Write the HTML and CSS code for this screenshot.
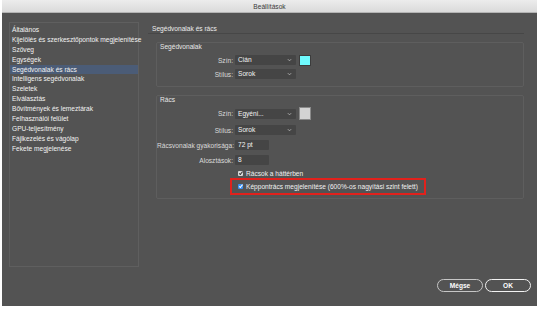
FILE: index.html
```html
<!DOCTYPE html>
<html lang="hu">
<head>
    <meta charset="UTF-8">
    <title>Beállítások</title>
    <link rel="stylesheet" href="styles.css">
</head>
<body>
    <div class="dialog">
        <div class="titlebar">Beállítások</div>

        <div class="main">
            <ul class="nav">
                <li>Általános</li>
                <li>Kijelölés és szerkesztőpontok megjelenítése</li>
                <li>Szöveg</li>
                <li>Egységek</li>
                <li class="active">Segédvonalak és rács</li>
                <li>Intelligens segédvonalak</li>
                <li>Szeletek</li>
                <li>Elválasztás</li>
                <li>Bővítmények és lemeztárak</li>
                <li>Felhasználói felület</li>
                <li>GPU-teljesítmény</li>
                <li>Fájlkezelés és vágólap</li>
                <li>Fekete megjelenése</li>
            </ul>

            <div class="content">
                <div class="heading">Segédvonalak és rács</div>

                <div class="group">
                    <div class="group-title">Segédvonalak</div>
                    <div class="row">
                        <span class="label">Szín:</span>
                        <div class="select">Cián
                            <svg class="chevron" viewBox="0 0 6 4"><path d="M1 1 L3 3 L5 1"/></svg>
                        </div>
                        <span class="swatch swatch-cyan"></span>
                    </div>
                    <div class="row">
                        <span class="label">Stílus:</span>
                        <div class="select">Sorok
                            <svg class="chevron" viewBox="0 0 6 4"><path d="M1 1 L3 3 L5 1"/></svg>
                        </div>
                    </div>
                </div>

                <div class="group group-grid">
                    <div class="group-title">Rács</div>
                    <div class="row row-tall">
                        <span class="label">Szín:</span>
                        <div class="select">Egyéni...
                            <svg class="chevron" viewBox="0 0 6 4"><path d="M1 1 L3 3 L5 1"/></svg>
                        </div>
                        <span class="swatch swatch-grey"></span>
                    </div>
                    <div class="row">
                        <span class="label">Stílus:</span>
                        <div class="select">Sorok
                            <svg class="chevron" viewBox="0 0 6 4"><path d="M1 1 L3 3 L5 1"/></svg>
                        </div>
                    </div>
                    <div class="row">
                        <span class="label">Rácsvonalak gyakorisága:</span>
                        <div class="field">72 pt</div>
                    </div>
                    <div class="row">
                        <span class="label">Alosztások:</span>
                        <div class="field">8</div>
                    </div>
                    <div class="check-row">
                        <span class="check"></span>
                        <span>Rácsok a háttérben</span>
                    </div>
                    <div class="highlight">
                        <div class="check-row">
                            <span class="check check-blue"></span>
                            <span>Képpontrács megjelenítése (600%-os nagyítási szint felett)</span>
                        </div>
                    </div>
                </div>
            </div>
        </div>

        <div class="footer">
            <button class="btn">Mégse</button>
            <button class="btn btn-ok">OK</button>
        </div>
    </div>
</body>
</html>
```

FILE: styles.css
```css
* {
    box-sizing: border-box;
    margin: 0;
    padding: 0;
}

body {
    background: #ffffff;
    font-family: "Liberation Sans", Arial, sans-serif;
    font-size: 6.6px;
    color: #e4e4e4;
}

.dialog {
    width: 535px;
    height: 306px;
    margin-left: 2px;
    background: #535353;
    display: flex;
    flex-direction: column;
}

.titlebar {
    height: 13px;
    line-height: 13px;
    text-align: center;
    color: #3a3a3a;
    background: linear-gradient(#ececec, #dadada);
    border-bottom: 1px solid #b4b4b4;
}

.main {
    display: flex;
    padding: 9px 0 0 7px;
}

/* left category list */
.nav {
    list-style: none;
    width: 130px;
    height: 245px;
    border: 1px solid #5f5f5f;
    padding-top: 2px;
}

.nav li {
    line-height: 9.9px;
    height: 9.9px;
    padding-left: 2px;
    color: #f2f2f2;
    white-space: nowrap;
}

.nav li.active {
    background: #4b5c77;
}

.content {
    width: 376px;
    margin-left: 9px;
}

.heading {
    margin-top: 3px;
    line-height: 8px;
    padding-left: 4px;
    border-bottom: 1px solid #474747;
    color: #ececec;
}

.group {
    margin: 8px 0 0 8px;
    border: 1px solid #5e5e5e;
    border-radius: 2px;
    padding-bottom: 7px;
}

.group-grid {
    padding-bottom: 3px;
}

.group-title {
    line-height: 8px;
    padding-left: 3px;
    color: #e8e8e8;
}

.row {
    display: flex;
    align-items: center;
    height: 10px;
    margin-top: 4px;
}

.group .row:first-of-type {
    margin-top: 5px;
}

.group-grid .row {
    margin-top: 5px;
}

.group-grid .row-tall {
    height: 13px;
    margin-top: 3px;
}

.label {
    width: 76px;
    text-align: right;
    color: #dadada;
    white-space: nowrap;
}

.select,
.field {
    margin-left: 2px;
    height: 10px;
    line-height: 10px;
    background: #454545;
    padding-left: 3px;
    color: #f4f4f4;
    border-radius: 1px;
}

.select {
    width: 61px;
    position: relative;
}

.field {
    width: 34px;
}

.chevron {
    position: absolute;
    right: 4px;
    top: 3px;
    width: 5px;
    height: 4px;
    fill: none;
    stroke: #c4c4c4;
    stroke-width: 0.9;
}

.swatch {
    margin-left: 3px;
    border: 1px solid #3c3c3c;
}

.swatch-cyan {
    width: 12px;
    height: 11px;
    background: #6ffafe;
}

.swatch-grey {
    width: 12px;
    height: 13px;
    background: #d3d3d3;
    border-color: #8a8a8a;
}

.check-row {
    display: flex;
    align-items: center;
    height: 9px;
    margin-top: 4px;
    padding-left: 81px;
    gap: 3px;
    color: #f0f0f0;
    white-space: nowrap;
}

.check {
    width: 5px;
    height: 5px;
    border-radius: 1px;
    background: #d8d8d8;
    position: relative;
}

.check::after {
    content: "";
    position: absolute;
    left: 1.5px;
    top: 0.3px;
    width: 1.2px;
    height: 2.6px;
    border: solid #3a3a3a;
    border-width: 0 0.8px 0.8px 0;
    transform: rotate(40deg);
}

.check-blue {
    background: #3b8ff0;
}

.check-blue::after {
    border-color: #ffffff;
}

.highlight {
    width: fit-content;
    margin-left: 73px;
    border: 2px solid #e2211c;
    height: 17px;
    padding: 0 6px 0 3px;
    display: flex;
    align-items: center;
}

.highlight .check-row {
    margin-top: 0;
    padding-left: 3px;
}

.footer {
    margin-top: auto;
    display: flex;
    justify-content: flex-end;
    gap: 2px;
    padding: 0 6px 14px 0;
}

.btn {
    width: 46px;
    height: 13px;
    border: 1.5px solid #c6c6c6;
    border-radius: 7px;
    background: #535353;
    color: #ffffff;
    font-family: inherit;
    font-size: 6.6px;
    font-weight: bold;
}

.btn-ok {
    border-color: #f2f2f2;
}
```
